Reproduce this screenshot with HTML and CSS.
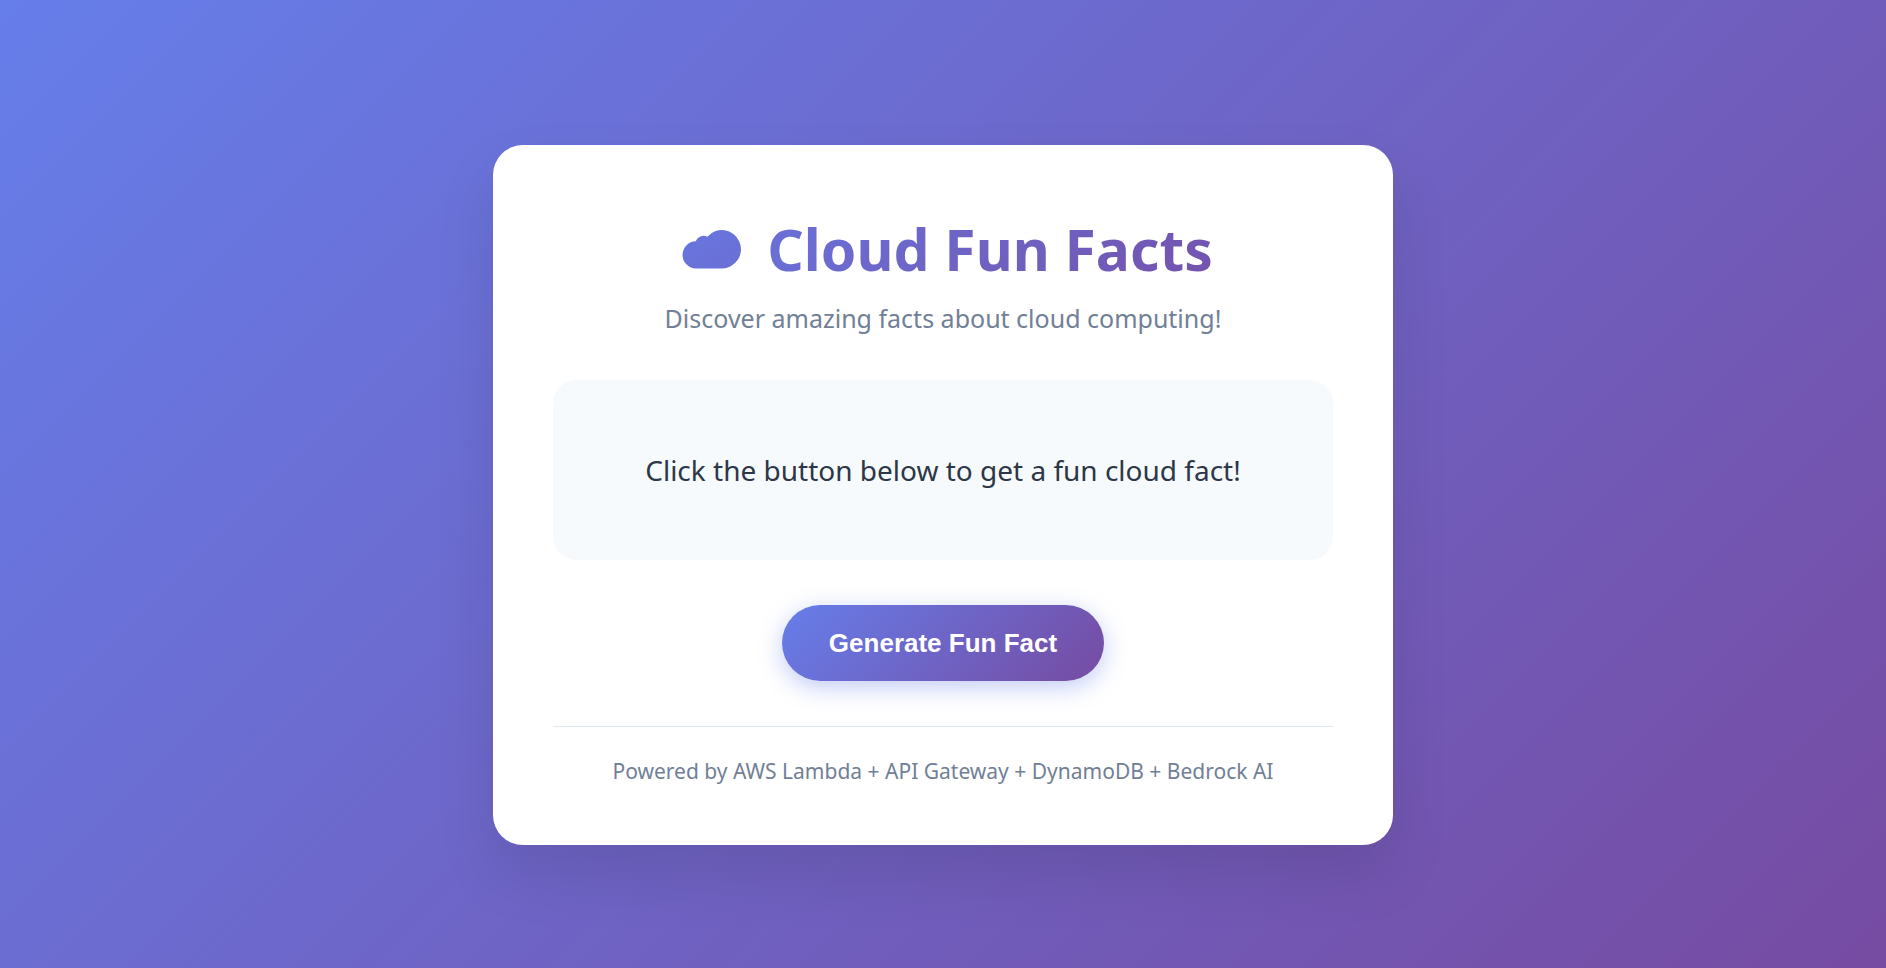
FILE: index.html
```html
<!DOCTYPE html>
<html lang="en">
<head>
<meta charset="UTF-8">
<meta name="viewport" content="width=device-width, initial-scale=1">
<title>Cloud Fun Facts</title>
<link rel="stylesheet" href="styles.css">
</head>
<body>
<main class="card">
  <h1 class="title">
    <svg class="cloud" viewBox="0 0 60 39" aria-hidden="true">
      <defs>
        <linearGradient id="cloud-fill" x1="0" y1="0" x2="1" y2="1">
          <stop offset="0" stop-color="#6876df"/>
          <stop offset="1" stop-color="#6a6fd5"/>
        </linearGradient>
      </defs>
      <path fill="url(#cloud-fill)" d="M13.7 38.5A13.7 13.7 0 0 1 14.7 11.2A8.5 8.5 0 0 1 26.3 6.7A19.2 19.2 0 1 1 40.5 38.5Z"/>
    </svg>
    <span>Cloud Fun Facts</span>
  </h1>
  <p class="subtitle">Discover amazing facts about cloud computing!</p>
  <section class="fact">
    <p class="fact-text">Click the button below to get a fun cloud fact!</p>
  </section>
  <button class="generate" type="button">Generate Fun Fact</button>
  <footer class="footer">
    <p class="footer-text">Powered by AWS Lambda + API Gateway + DynamoDB + Bedrock AI</p>
  </footer>
</main>
</body>
</html>
```
FILE: styles.css
```css
* {
  margin: 0;
  padding: 0;
  box-sizing: border-box;
}

body {
  min-height: 100vh;
  padding: 52px 30px 30px;
  display: flex;
  align-items: center;
  justify-content: center;
  font-family: "Segoe UI", "Noto Sans", "Open Sans", sans-serif;
  background: linear-gradient(135deg, #667eea 0%, #764ba2 100%);
}

.card {
  width: 100%;
  max-width: 900px;
  padding: 60px;
  border-radius: 30px;
  text-align: center;
  background: #fff;
  box-shadow: 0 30px 60px rgba(0, 0, 0, 0.1);
}

.title {
  display: flex;
  align-items: center;
  justify-content: center;
  gap: 26px;
  margin-bottom: 8px;
  padding-left: 8px;
  font-size: 57px;
  line-height: 88px;
  color: transparent;
  background: linear-gradient(135deg, #667eea, #764ba2);
  background-clip: text;
  -webkit-background-clip: text;
}

.cloud {
  width: 60px;
  height: 39px;
}

.subtitle {
  margin-bottom: 44px;
  font-size: 25px;
  line-height: 35px;
  color: #718096;
}

.fact {
  display: flex;
  align-items: center;
  justify-content: center;
  min-height: 180px;
  margin-bottom: 45px;
  padding: 45px;
  border-radius: 23px;
  background: #f7fafc;
}

.fact-text {
  font-size: 28px;
  line-height: 46px;
  color: #2d3748;
}

.generate {
  padding: 23px 47px;
  border: none;
  border-radius: 75px;
  font-family: "Liberation Sans", Arial, sans-serif;
  font-size: 26px;
  font-weight: 600;
  line-height: 30px;
  color: #fff;
  cursor: pointer;
  background: linear-gradient(135deg, #667eea 0%, #764ba2 100%);
  box-shadow: 0 6px 23px rgba(102, 126, 234, 0.4);
}

.footer {
  margin-top: 45px;
  padding-top: 30px;
  border-top: 1px solid #e2e8f0;
}

.footer-text {
  font-size: 21px;
  line-height: 28px;
  color: #718096;
}
```
